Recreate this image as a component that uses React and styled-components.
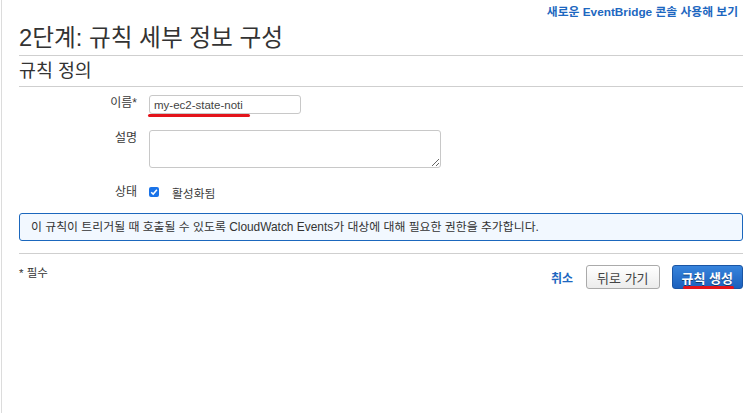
import React from "react";
import styled, { createGlobalStyle } from "styled-components";

const Global = createGlobalStyle`
  html, body { margin: 0; padding: 0; background: #fff; }
  body { font-family: "Liberation Sans", "Noto Sans CJK KR", Arial, sans-serif; color: #333; }
  * { box-sizing: border-box; }
`;

const Page = styled.div`
  margin-left: 1px;
  border-left: 1px solid #dcdcdc;
  min-height: 413px;
  padding: 0 11px 0 17px;
`;

const TopBar = styled.div`
  display: flex;
  justify-content: flex-end;
  padding: 5px 5px 0 0;
  height: 24px;
`;

const TopLink = styled.a`
  font-size: 11.8px;
  line-height: 14px;
  font-weight: bold;
  color: #1d67c0;
  text-decoration: none;
`;

const Title = styled.h1`
  margin: 0;
  font-size: 23.7px;
  line-height: 28px;
  font-weight: normal;
  color: #333;
  padding-bottom: 3px;
  border-bottom: 1px solid #cfcfcf;
`;

const SectionTitle = styled.h2`
  margin: 0;
  font-size: 18.4px;
  line-height: 22px;
  font-weight: normal;
  color: #333;
  padding: 4px 0 4px;
  border-bottom: 1px solid #cfcfcf;
`;

const Form = styled.div`
  display: grid;
  grid-template-columns: 118px 1fr;
  column-gap: 12px;
  row-gap: 16px;
  margin-top: 8px;
  align-items: start;
`;

const Label = styled.div`
  text-align: right;
  font-size: 12px;
  line-height: 14px;
  color: #3a3a3a;
  padding-top: ${(p) => p.$top}px;
`;

const Field = styled.div`
  position: relative;
  display: flex;
  align-items: center;
`;

const TextInput = styled.input`
  width: 152px;
  height: 19px;
  border: 1px solid #c8c8c8;
  border-radius: 3px;
  padding: 0 4px;
  font-family: "Liberation Sans", Arial, sans-serif;
  font-size: 11.5px;
  color: #444;
  outline: none;
  background: #fff;
`;

const TextArea = styled.textarea`
  width: 292px;
  height: 38px;
  border: 1px solid #c8c8c8;
  border-radius: 3px;
  padding: 3px 4px;
  font-family: "Liberation Sans", Arial, sans-serif;
  font-size: 12px;
  outline: none;
  display: block;
`;

const RedMark = styled.span`
  position: absolute;
  left: ${(p) => p.$left}px;
  top: ${(p) => p.$top}px;
  width: ${(p) => p.$width}px;
  height: 2.5px;
  border-radius: 2px;
  background: #e3141b;
  pointer-events: none;
`;

const CheckRow = styled.label`
  display: flex;
  align-items: center;
  gap: 13px;
  font-size: 11.8px;
  color: #3a3a3a;
  height: 16px;
`;

const Box = styled.span`
  width: 10px;
  height: 10px;
  border-radius: 2px;
  background: #1a73e8;
  display: inline-flex;
  align-items: center;
  justify-content: center;
`;

const Info = styled.div`
  margin-top: 13px;
  border: 1px solid #1b67bd;
  border-radius: 3px;
  background: #f2f8ff;
  padding: 0 11px;
  font-size: 11.9px;
  line-height: 26px;
  color: #333;
  white-space: nowrap;
`;

const Divider = styled.div`
  margin-top: 12px;
  border-top: 1px solid #cfcfcf;
`;

const Footer = styled.div`
  display: flex;
  justify-content: space-between;
  align-items: flex-start;
  margin-top: 11px;
`;

const Required = styled.div`
  font-size: 11.5px;
  color: #333;
  line-height: 14px;
  padding-top: 1px;
`;

const Actions = styled.div`
  display: flex;
  align-items: center;
  gap: 12px;
`;

const CancelLink = styled.a`
  font-size: 12px;
  font-weight: bold;
  color: #1d67c0;
  margin-right: 1px;
  text-decoration: none;
`;

const Button = styled.button`
  position: relative;
  height: 24px;
  padding: 0 ${(p) => (p.$primary ? 9 : 10)}px;
  border-radius: 3px;
  font-family: "Liberation Sans", "Noto Sans CJK KR", sans-serif;
  font-size: 13px;
  cursor: pointer;
  border: 1px solid ${(p) => (p.$primary ? "#1a55a4" : "#aaaaaa")};
  background: ${(p) =>
    p.$primary
      ? "linear-gradient(#3784dc, #1b60bd)"
      : "linear-gradient(#ffffff, #ececec)"};
  color: ${(p) => (p.$primary ? "#fff" : "#444")};
  font-weight: ${(p) => (p.$primary ? "bold" : "normal")};
  text-shadow: ${(p) => (p.$primary ? "0 1px 0 rgba(0,0,0,0.45)" : "none")};
`;

export default function App() {
  return (
    <>
      <Global />
      <Page>
        <TopBar>
          <TopLink href="#">새로운 EventBridge 콘솔 사용해 보기</TopLink>
        </TopBar>
        <Title>2단계: 규칙 세부 정보 구성</Title>
        <SectionTitle>규칙 정의</SectionTitle>
        <Form>
          <Label $top={1}>이름*</Label>
          <Field>
            <TextInput defaultValue="my-ec2-state-noti" />
            <RedMark $left={-1} $top={19} $width={102} />
          </Field>
          <Label $top={1}>설명</Label>
          <Field>
            <TextArea />
          </Field>
          <Label $top={1}>상태</Label>
          <CheckRow>
            <Box>
              <svg width="8" height="8" viewBox="0 0 8 8">
                <path d="M1.2 4.2 L3.2 6.1 L6.9 1.8" fill="none" stroke="#fff" strokeWidth="1.5" />
              </svg>
            </Box>
            활성화됨
          </CheckRow>
        </Form>
        <Info>
          이 규칙이 트리거될 때 호출될 수 있도록 CloudWatch Events가 대상에 대해 필요한 권한을 추가합니다.
        </Info>
        <Divider />
        <Footer>
          <Required>* 필수</Required>
          <Actions>
            <CancelLink href="#">취소</CancelLink>
            <Button>뒤로 가기</Button>
            <Button $primary>
              규칙 생성
              <RedMark $left={10} $top={20} $width={51} />
            </Button>
          </Actions>
        </Footer>
      </Page>
    </>
  );
}
